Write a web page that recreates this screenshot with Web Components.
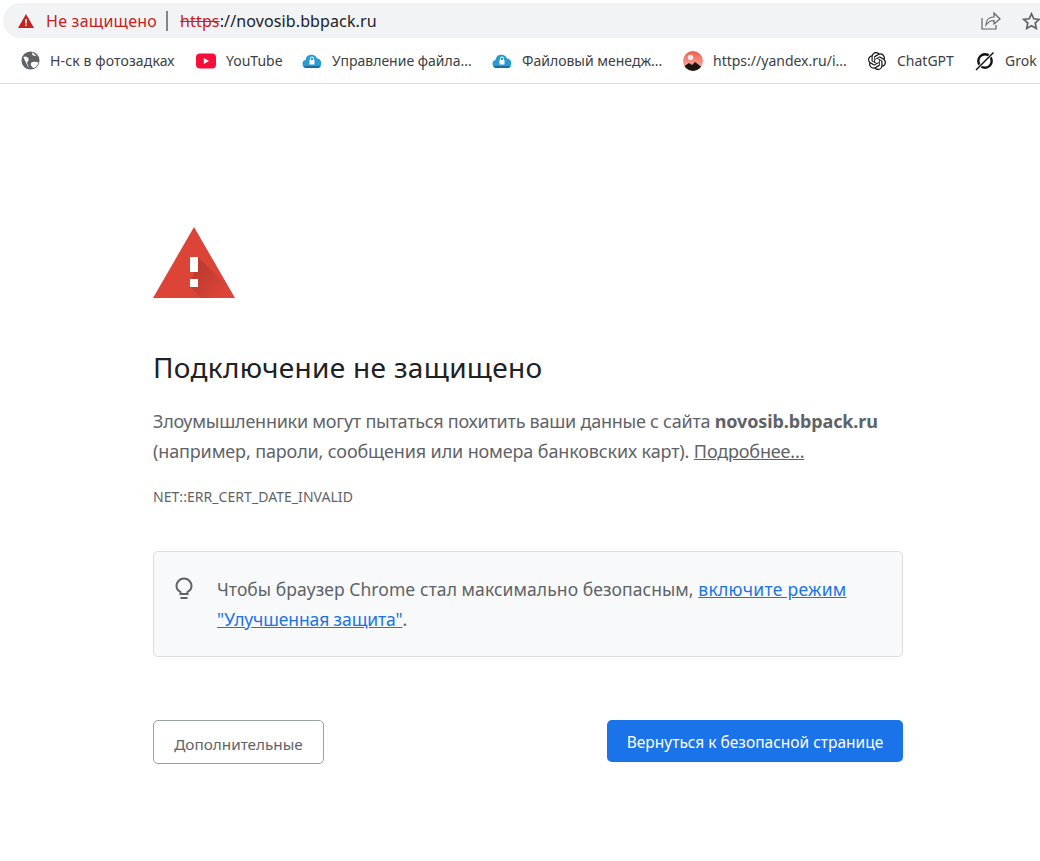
<!DOCTYPE html>
<html lang="ru"><head><meta charset="utf-8"><title>Подключение не защищено</title>
<style>
html,body{margin:0;padding:0;background:#fff;overflow:hidden}
body{width:1040px;height:861px;font-family:"Noto Sans","Open Sans",sans-serif}
</style></head><body>
<x-omnibox></x-omnibox>
<x-bookmarks>
  <x-bookmark w="176" ls=".12" label="Н-ск в фотозадках"><svg viewBox="0 0 20 20" width="19" height="19"><circle cx="10" cy="10" r="9.500" fill="#5f6368"/><path d="M2.500 6.500c2.500-1.500 5 0 5.500 2s-1.500 2.500-1.500 4 1.500 2 1.500 5.500M12 1.500c-1 2 .5 3.500 2.500 3.500 1.500 0 2.500-.5 3 1M10.500 12.500c1.500-1.500 5-1.500 8-.5-1 3-3 5.500-5.500 6-1.500-1.500-3.500-3.500-2.500-5.500z" fill="#fff"/></svg></x-bookmark>
  <x-bookmark w="106" label="YouTube"><svg viewBox="0 0 20 20" width="20" height="20"><rect x="0" y="2.500" width="20" height="15" rx="4" fill="#f50f3a"/><path d="M7.800 7l5.200 3-5.200 3z" fill="#fff"/></svg></x-bookmark>
  <x-bookmark w="190" label="Управление файла..."><svg viewBox="0 0 20 20" width="20" height="20"><path d="M4 16.500a3.800 3.800 0 0 1-.5-7.500 6 6 0 0 1 11.500-1.500 4.600 4.600 0 0 1 1 9z" fill="#2a9bd0"/><path d="M1 15h18l-2 2H3z" fill="#16709e"/><rect x="7.500" y="9" width="5" height="4.500" fill="#fff"/><path d="M8.500 9V7.500a1.500 1.500 0 0 1 3 0V9" fill="none" stroke="#fff"/></svg></x-bookmark>
  <x-bookmark w="191" label="Файловый менедж..."><svg viewBox="0 0 20 20" width="20" height="20"><path d="M4 16.500a3.800 3.800 0 0 1-.5-7.500 6 6 0 0 1 11.500-1.500 4.600 4.600 0 0 1 1 9z" fill="#2a9bd0"/><path d="M1 15h18l-2 2H3z" fill="#16709e"/><rect x="7.500" y="9" width="5" height="4.500" fill="#fff"/><path d="M8.500 9V7.500a1.500 1.500 0 0 1 3 0V9" fill="none" stroke="#fff"/></svg></x-bookmark>
  <x-bookmark w="184" label="https://yandex.ru/i..."><svg viewBox="0 0 20 20" width="20" height="20"><defs><linearGradient id="g" x1="0" y1="0" x2="0" y2="1"><stop offset="0" stop-color="#ef5b4c"/><stop offset="1" stop-color="#f7bdb2"/></linearGradient><clipPath id="c"><circle cx="10" cy="10" r="10"/></clipPath></defs><g clip-path="url(#c)"><rect width="20" height="20" fill="url(#g)"/><circle cx="7.500" cy="6.500" r="2.800" fill="#fbe7e0"/><path d="M0 16l6-4 3 2 3-3 8 6v5H0z" fill="#1c1513"/></g></svg></x-bookmark>
  <x-bookmark w="108" label="ChatGPT"><svg viewBox="0 0 24 24" width="18" height="18" fill="#111"><path d="M22.2819 9.8211a5.9847 5.9847 0 0 0-.5157-4.9108 6.0462 6.0462 0 0 0-6.5098-2.9A6.0651 6.0651 0 0 0 4.9807 4.1818a5.9847 5.9847 0 0 0-3.9977 2.9 6.0462 6.0462 0 0 0 .7427 7.0966 5.98 5.98 0 0 0 .511 4.9107 6.051 6.051 0 0 0 6.5146 2.9001A5.9847 5.9847 0 0 0 13.2599 24a6.0557 6.0557 0 0 0 5.7718-4.2058 5.9894 5.9894 0 0 0 3.9977-2.9001 6.0557 6.0557 0 0 0-.7475-7.0729zm-9.022 12.6081a4.4755 4.4755 0 0 1-2.8764-1.0408l.1419-.0804 4.7783-2.7582a.7948.7948 0 0 0 .3927-.6813v-6.7369l2.02 1.1686a.071.071 0 0 1 .038.052v5.5826a4.504 4.504 0 0 1-4.4945 4.4944zm-9.6607-4.1254a4.4708 4.4708 0 0 1-.5346-3.0137l.142.0852 4.783 2.7582a.7712.7712 0 0 0 .7806 0l5.8428-3.3685v2.3324a.0804.0804 0 0 1-.0332.0615L9.74 19.9502a4.4992 4.4992 0 0 1-6.1408-1.6464zM2.3408 7.8956a4.485 4.485 0 0 1 2.3655-1.9728V11.6a.7664.7664 0 0 0 .3879.6765l5.8144 3.3543-2.0201 1.1685a.0757.0757 0 0 1-.071 0l-4.8303-2.7865A4.504 4.504 0 0 1 2.3408 7.872zm16.5963 3.8558L13.1038 8.364 15.1192 7.2a.0757.0757 0 0 1 .071 0l4.8303 2.7913a4.4944 4.4944 0 0 1-.6765 8.1042v-5.6772a.79.79 0 0 0-.407-.667zm2.0107-3.0231l-.142-.0852-4.7735-2.7818a.7759.7759 0 0 0-.7854 0L9.409 9.2297V6.8974a.0662.0662 0 0 1 .0284-.0615l4.8303-2.7866a4.4992 4.4992 0 0 1 6.6802 4.66zM8.3065 12.863l-2.02-1.1638a.0804.0804 0 0 1-.038-.0567V6.0742a4.4992 4.4992 0 0 1 7.3757-3.4537l-.142.0805L8.704 5.459a.7948.7948 0 0 0-.3927.6813zm1.0976-2.3654l2.602-1.4998 2.6069 1.4998v2.9994l-2.5974 1.4997-2.6067-1.4997Z"/></svg></x-bookmark>
  <x-bookmark w="80" label="Grok"><svg viewBox="0 0 20 20" width="20" height="20" fill="none" stroke="#111"><circle cx="10" cy="10" r="6.700" stroke-width="2.400"/><path d="M1 19L18.500 1.500" stroke="#fff" stroke-width="3"/><path d="M1 19L18.500 1.500" stroke-width="1.400"/></svg></x-bookmark>
</x-bookmarks>
<x-interstitial>
  <svg slot="icon" viewBox="0 0 82 71" width="82" height="71"><defs><linearGradient id="sh" gradientUnits="userSpaceOnUse" x1="41" y1="45" x2="68" y2="68"><stop offset="0" stop-color="#000" stop-opacity=".14"/><stop offset="1" stop-color="#000" stop-opacity="0"/></linearGradient></defs><path d="M41 0L82 71H0z" fill="#db4437"/><path d="M45 30L72 57V63L66 71H48L37 60z" fill="url(#sh)"/><rect x="37" y="30" width="8" height="15" fill="#fff"/><rect x="37" y="52" width="8" height="8" fill="#fff"/></svg>
  <span slot="title">Подключение не защищено</span>
  <span><span style="letter-spacing:-.25px">Злоумышленники могут пытаться похитить ваши данные с сайта </span><b style="letter-spacing:-.12px">novosib.bbpack.ru</b><br><span style="letter-spacing:-.14px">(например, пароли, сообщения или номера банковских карт). </span><a style="letter-spacing:-.16px">Подробнее...</a></span>
  <span slot="code">NET::ERR_CERT_DATE_INVALID</span>
  <x-tip slot="tip">Чтобы браузер Chrome стал максимально безопасным, <a style="letter-spacing:.3px">включите режим</a><br><a style="letter-spacing:-.12px">"Улучшенная защита"</a>.</x-tip>
  <x-btn slot="left">Дополнительные</x-btn>
  <x-btn slot="right" primary>Вернуться к безопасной странице</x-btn>
</x-interstitial>
<script>
const def=(n,html,init)=>customElements.define(n,class extends HTMLElement{connectedCallback(){if(this.shadowRoot)return;const s=this.attachShadow({mode:'open'});s.innerHTML=html;init&&init.call(this,s)}});
def('x-omnibox',`<style>
:host{display:flex;align-items:center;height:35px;margin:3px 0 0 3px;background:#f1f3f4;border-radius:18px 0 0 18px;color:#202124;font-size:16px;overflow:hidden;white-space:nowrap}
.w{margin-left:15px;flex:none;display:block}
.ns{color:#c5221f;margin-left:12px;letter-spacing:.25px}
.sep{width:2px;height:20px;background:#80868b;margin:0 12px 0 9px}
s{color:#c5221f;text-decoration-thickness:1px}
.url{flex:1;letter-spacing:.12px}
.i{flex:none;display:block}
</style>
<svg class="w" width="16" height="14" viewBox="0 0 16 14"><path d="M8 0l8 14H0z" fill="#c5221f"/><rect x="7.200" y="5" width="1.600" height="4.500" fill="#fff"/><rect x="7.200" y="10.500" width="1.600" height="1.600" fill="#fff"/></svg>
<span class="ns">Не защищено</span><span class="sep"></span>
<span class="url"><s>https</s>://novosib.bbpack.ru</span>
<svg class="i" style="margin-right:21px" width="20" height="19" viewBox="0 0 20 19" fill="none" stroke="#5f6368" stroke-width="1.200"><path d="M1 7v11h14v-4"/><path d="M5 14c0-5 3-8 8-8V2l6 6-6 5V9.500c-4 0-6 1.500-8 4.500z"/></svg>
<svg class="i" style="margin-right:-1px" width="19" height="18" viewBox="0 0 19 18" fill="none" stroke="#5f6368" stroke-width="1.700"><path d="M9.500 1.800l2.300 5 5.400.6-4 3.700 1.100 5.300-4.800-2.700-4.800 2.700 1.100-5.300-4-3.700 5.400-.6z"/></svg>`);
def('x-bookmarks',`<style>:host{display:flex;align-items:center;height:46px;box-sizing:border-box;border-bottom:1px solid #dadce0;padding:0 0 0 20px;overflow:hidden}</style><slot></slot>`);
def('x-bookmark',`<style>:host{display:flex;flex:none;align-items:center;font-size:14px;color:#3c4043;white-space:nowrap}
.ic{width:20px;height:20px;display:flex;align-items:center;justify-content:center;margin-right:10px;flex:none}</style><span class="ic"><slot></slot></span><span id="t"></span>`,function(s){const t=s.getElementById('t');t.textContent=this.getAttribute('label');this.style.width=this.getAttribute('w')+'px';if(this.hasAttribute('ls'))t.style.letterSpacing=this.getAttribute('ls')+'px'});
def('x-interstitial',`<style>:host{display:block;width:750px;margin:0 0 0 153px;padding-top:143px;color:#5f6368;font-size:18px;line-height:30px}
.ic{display:block;height:71px}
h1{margin:54px 0 0;font-weight:400;font-size:28px;line-height:30px;color:#202124;letter-spacing:.3px}
p{margin:24px 0 0}
.code{font-size:14px;line-height:20px;margin-top:21px;letter-spacing:.05px}
.tip{margin-top:44px}
.btns{display:flex;justify-content:space-between;align-items:flex-start;margin-top:63px}
::slotted(svg){display:block}
</style><div class="ic"><slot name="icon"></slot></div><h1><slot name="title"></slot></h1><p><slot></slot></p><div class="code"><slot name="code"></slot></div><div class="tip"><slot name="tip"></slot></div><div class="btns"><slot name="left"></slot><slot name="right"></slot></div>`);
def('x-tip',`<style>:host{display:flex;box-sizing:border-box;height:106px;padding:22px 20px 0 20px;border:1px solid #dadce0;border-radius:5px;background:#f8f9fa;font-size:17.5px;line-height:30px;letter-spacing:.07px}
svg{flex:none;display:block;margin:3px 23px 0 0}
</style><svg width="20" height="24" viewBox="0 0 20 24" fill="none" stroke="#5f6368" stroke-width="2"><path d="M6.500 17v-2C4 13.600 2.500 11.300 2.500 9a7.500 7.500 0 0 1 15 0c0 2.300-1.500 4.600-4 6v2z"/><path d="M6.500 21h7"/></svg><div><slot></slot></div>`);
def('x-btn',`<style>:host{display:block;box-sizing:border-box;font-size:15.500px;border-radius:5px;text-align:center;white-space:nowrap}
:host(:not([primary])){width:171px;height:44px;border:1px solid #9aa0a6;color:#5f6368;line-height:46px;font-size:15.3px}
:host([primary]){width:296px;height:42px;line-height:44px;background:#1a73e8;color:#fff}</style><slot></slot>`);
</script>
<style>
x-interstitial a{color:#5f6368;text-decoration:underline}
x-tip a{color:#1a73e8;text-decoration:underline}
x-interstitial b{font-weight:700}
</style>
</body></html>
